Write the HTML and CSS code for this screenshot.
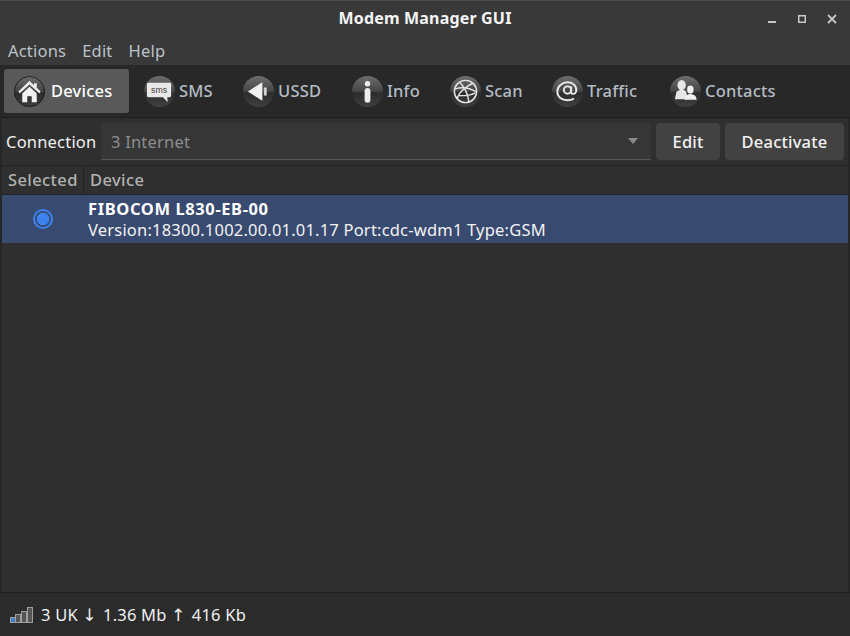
FILE: index.html
```html
<!DOCTYPE html>
<html lang="en">
<head>
<meta charset="utf-8">
<title>Modem Manager GUI</title>
<link rel="stylesheet" href="styles.css">
</head>
<body>
<svg class="defs" width="0" height="0" aria-hidden="true">
  <defs>
    <linearGradient id="disc" x1="0" y1="0" x2="0" y2="1">
      <stop offset="0" stop-color="#6e6e6e"/>
      <stop offset="0.48" stop-color="#464646"/>
      <stop offset="0.55" stop-color="#2c2c2c"/>
      <stop offset="1" stop-color="#404040"/>
    </linearGradient>
    <symbol id="disc-bg" viewBox="0 0 32 32">
      <circle cx="16" cy="16" r="16" fill="url(#disc)"/>
    </symbol>
  </defs>
</svg>
<div class="window">
  <header class="titlebar">
    <span class="title">Modem Manager GUI</span>
    <div class="winctl">
      <svg width="10" height="10" viewBox="0 0 10 10"><rect x="1" y="7" width="8" height="2" fill="#c8c8c8"/></svg>
      <svg width="10" height="10" viewBox="0 0 10 10"><rect x="1.750" y="1.750" width="6.500" height="6.500" fill="none" stroke="#c8c8c8" stroke-width="1.500"/></svg>
      <svg width="10" height="10" viewBox="0 0 10 10"><path d="M1 1l8 8M9 1l-8 8" stroke="#c8c8c8" stroke-width="1.800" fill="none"/></svg>
    </div>
  </header>
  <nav class="menubar">
    <span>Actions</span><span>Edit</span><span>Help</span>
  </nav>
  <div class="toolbar">
    <div class="tool active tool-devices">
      <svg class="ico" viewBox="0 0 32 32"><use href="#disc-bg"/><circle cx="16" cy="16" r="15.500" fill="none" stroke="#1e1e1e"/><path d="M16 5L4.500 16l1.300 2L16 8.800 26.200 18l1.300-2-4-3.800V7.500h-3v2z" fill="#ececec"/><path d="M8.500 18L16 11l7.500 7v9h-5.200v-6h-4.600v6H8.500z" fill="#f2f2f2"/></svg>
      <span>Devices</span>
    </div>
    <div class="tool tool-sms">
      <svg class="ico" viewBox="0 0 32 32"><use href="#disc-bg"/><path d="M4.500 7h22a1.500 1.500 0 0 1 1.500 1.500v12a1.500 1.500 0 0 1-1.500 1.500H24l.5 5-5-5H4.500A1.500 1.500 0 0 1 3 20.500v-12A1.500 1.500 0 0 1 4.500 7z" fill="#e8e8e8"/><text x="15.500" y="17.500" class="smstxt" text-anchor="middle">sms</text></svg>
      <span>SMS</span>
    </div>
    <div class="tool tool-ussd">
      <svg class="ico" viewBox="0 0 32 32"><use href="#disc-bg"/><path d="M5 16L20 6.500V25.500z" fill="#f0f0f0"/><rect x="21.500" y="11.500" width="3" height="9" rx="1.500" fill="#cfcfcf"/></svg>
      <span>USSD</span>
    </div>
    <div class="tool tool-info">
      <svg class="ico" viewBox="0 0 32 32"><use href="#disc-bg"/><circle cx="16" cy="8" r="2.800" fill="#ededed"/><rect x="13" y="12.500" width="6" height="15" rx="3" fill="#ededed"/></svg>
      <span>Info</span>
    </div>
    <div class="tool tool-scan">
      <svg class="ico" viewBox="0 0 32 32"><use href="#disc-bg"/><g fill="none" stroke="#e6e6e6" stroke-width="1.500"><circle cx="16" cy="16" r="11.500"/><path d="M10 6.500c4.500 4.500 8.500 11.500 9.500 20.500M23.500 7.500C17 10.500 8.500 17 7.500 24M4.800 13.500c7-2.500 15-1.500 22.400 3M9 20c5 .5 12 .5 17-2.500"/></g></svg>
      <span>Scan</span>
    </div>
    <div class="tool tool-traffic">
      <svg class="ico" viewBox="0 0 32 32"><use href="#disc-bg"/><g fill="none" stroke="#e8e8e8" stroke-width="2"><circle cx="16" cy="14.500" r="3.800"/><path d="M19.800 10.500v6.500c0 2 4.200 2.200 5.100-1 1.200-5.500-3.300-9.500-8.700-9.500-5.800 0-10.700 4-10.700 9.500 0 5.800 4.800 9 10.300 9 2.800 0 4.900-.5 6.800-1.700"/></g></svg>
      <span>Traffic</span>
    </div>
    <div class="tool tool-contacts">
      <svg class="ico" viewBox="0 0 32 32"><use href="#disc-bg"/><ellipse cx="12" cy="9.500" rx="4.300" ry="5.300" fill="#e6e6e6"/><path d="M5 24l1.500-7c1-2 3-2.800 5.500-2.800s4.500 1 5 2.800l1 7z" fill="#e6e6e6"/><ellipse cx="21" cy="14" rx="3.700" ry="4.500" fill="#f0f0f0" stroke="#3a3a3a" stroke-width=".6"/><path d="M15 24.500c.3-3.500 1-5.500 6-6 5 .5 6 2.500 6.500 6z" fill="#f0f0f0"/></svg>
      <span>Contacts</span>
    </div>
  </div>
  <div class="connbar">
    <label class="connlabel">Connection</label>
    <div class="combo">
      <span>3 Internet</span>
      <svg class="caret" width="10" height="6" viewBox="0 0 10 6"><path d="M0 0h10L5 6z" fill="#8a8a8a"/></svg>
    </div>
    <button class="btn btn-edit">Edit</button>
    <button class="btn btn-deact">Deactivate</button>
  </div>
  <main class="table">
    <div class="thead">
      <div class="th th-sel">Selected</div>
      <div class="th th-dev">Device</div>
    </div>
    <div class="row">
      <div class="cell-sel"><span class="radio"></span></div>
      <div class="cell-dev">
        <div class="devname">FIBOCOM L830-EB-00</div>
        <div class="devinfo">Version:18300.1002.00.01.01.17 Port:cdc-wdm1 Type:GSM</div>
      </div>
    </div>
  </main>
  <footer class="statusbar">
    <svg class="signal" width="23" height="16" viewBox="0 0 23 16">
      <g fill="#555" stroke="#a0a0a0" stroke-width="1">
        <rect x="0.500" y="10.500" width="5" height="5" fill="#3f7fd0"/>
        <rect x="5.500" y="7.500" width="5" height="8"/>
        <rect x="11.500" y="4.500" width="5" height="11"/>
        <rect x="17.500" y="0.500" width="5" height="15"/>
      </g>
    </svg>
    <span class="status-text">3 UK <span class="arrow">↓</span> <span class="val">1.36 Mb</span> <span class="arrow">↑</span> <span class="val">416 Kb</span></span>
  </footer>
</div>
</body>
</html>
```

FILE: styles.css
```css
* { box-sizing: border-box; }
html, body { margin: 0; padding: 0; height: 100%; }
body {
  background: #2f2f2f;
  color: #fff;
  font-family: "Noto Sans", "Open Sans", sans-serif;
  font-size: 16.500px;
  letter-spacing: 0.2px;
  overflow: hidden;
}
.defs { position: absolute; }
.window {
  height: 636px;
  display: flex;
  flex-direction: column;
  border-left: 2px solid #262626;
  border-right: 2px solid #262626;
}
.titlebar {
  height: 38px;
  flex: none;
  margin: 0 -2px;
  background: #393939;
  border-top: 1px solid #4a4a4a;
  display: flex;
  align-items: center;
  justify-content: center;
  padding-bottom: 4px;
  position: relative;
}
.title { font-weight: 700; font-size: 16px; color: #f4f4f4; letter-spacing: 0.18px; }
.winctl {
  position: absolute;
  right: 13px;
  top: 13px;
  display: flex;
  gap: 20px;
}
.menubar {
  height: 27px;
  flex: none;
  margin: 0 -2px;
  background: #393939;
  display: flex;
  gap: 16px;
  padding: 0 8px;
  align-items: flex-start;
  color: #bcc3c9;
  line-height: 26px;
}
.toolbar {
  height: 53px;
  flex: none;
  margin: 0 -2px;
  background: #282828;
  border-bottom: 1px solid #1e1e1e;
  display: flex;
  align-items: center;
  padding: 0 4px;
  font-weight: 500;
  color: #b3bcc4;
}
.tool {
  height: 44px;
  display: flex;
  align-items: center;
  gap: 4px;
  border-radius: 3px;
  padding: 0 10px;
  flex: none;
}
.tool span { padding-bottom: 2px; }
.ico { width: 31px; height: 31px; flex: none; }
.smstxt { font-family: "Liberation Sans", sans-serif; font-size: 9px; fill: #444; letter-spacing: 0; }
.tool.active { background: #595959; color: #fff; width: 125px; margin-right: 5px; gap: 6px; }
.tool-sms { width: 99px; }
.tool-ussd { width: 109px; }
.tool-info { width: 98px; }
.tool-scan { width: 102px; }
.tool-traffic { width: 118px; }
.connbar {
  height: 48px;
  flex: none;
  background: #2f2f2f;
  border-bottom: 1px solid #232323;
  display: flex;
  align-items: center;
  gap: 5px;
  padding: 0 4px;
}
.connlabel { color: #f0f0f0; width: 90px; flex: none; }
.combo {
  flex: 1;
  height: 37px;
  background: #363636;
  border-bottom: 1px solid #555;
  border-radius: 3px 3px 0 0;
  display: flex;
  align-items: center;
  justify-content: space-between;
  padding: 0 13px 0 10px;
  color: #8d8d8d;
}
.btn {
  height: 37px;
  border: 0;
  border-radius: 4px;
  background: #424242;
  color: #f2f2f2;
  font: 500 16.500px "Noto Sans", sans-serif;
  letter-spacing: 0.2px;
  padding: 0;
  flex: none;
}
.btn-edit { width: 64px; }
.btn-deact { width: 119px; }
.table { flex: 1; background: #2f2f2f; display: flex; flex-direction: column; }
.thead {
  height: 29px;
  flex: none;
  display: flex;
  background: #2f2f2f;
  border-bottom: 1px solid #232323;
  color: #b2b2b2;
  font-weight: 500;
  letter-spacing: 0.4px;
  line-height: 28px;
}
.th { padding-left: 6px; }
.th-sel { width: 82px; border-right: 1px solid #242424; }
.row {
  height: 48px;
  flex: none;
  background: #384a6f;
  display: flex;
  align-items: center;
}
.cell-sel { width: 82px; display: flex; justify-content: center; }
.radio {
  width: 20px;
  height: 20px;
  border-radius: 50%;
  border: 2px solid #3c82f0;
  background: radial-gradient(circle, #3c82f0 0 6px, transparent 6.500px);
}
.cell-dev { padding-left: 4px; line-height: 21px; }
.devname { font-weight: 700; color: #fff; letter-spacing: 0.6px; }
.devinfo { color: #f2f2f2; }
.statusbar {
  margin: auto -2px 0;
  height: 44px;
  flex: none;
  background: #2b2b2b;
  border-top: 1px solid #1f1f1f;
  display: flex;
  align-items: center;
  gap: 8px;
  padding: 0 9px 0 10px;
  color: #f0f0f0;
}
.status-text { white-space: pre; }
.arrow { font-family: "DejaVu Sans", sans-serif; font-size: 17px; letter-spacing: 0; }
.val { margin-left: 2px; }
```
